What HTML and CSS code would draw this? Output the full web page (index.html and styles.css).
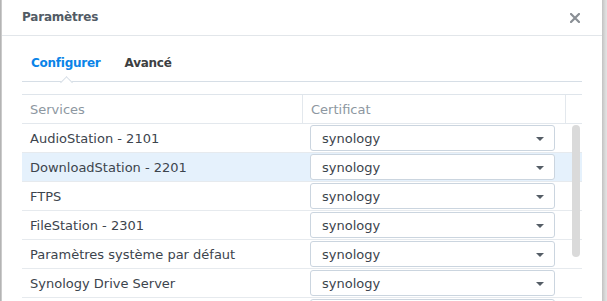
FILE: index.html
```html
<!DOCTYPE html>
<html lang="fr">
<head>
<meta charset="utf-8">
<title>Paramètres</title>
<link rel="stylesheet" href="styles.css">
</head>
<body>
<div class="frame">
  <div class="edge-left"></div>
  <div class="dialog">
    <div class="titlebar">
      <span class="title">Paramètres</span>
      <svg class="close" width="10" height="10" viewBox="0 0 10 10"><path d="M1 1L9 9M9 1L1 9" stroke="#8a8f95" stroke-width="2.2" stroke-linecap="square"/></svg>
    </div>
    <div class="content">
      <div class="tabs">
        <span class="tab active">Configurer<span class="notch"></span></span>
        <span class="tab">Avancé</span>
      </div>
      <div class="table">
        <div class="thead">
          <div class="th">Services</div>
          <div class="th">Certificat</div>
          <div class="th last"></div>
        </div>
        <div class="tbody">
          <div class="row"><div class="cell">AudioStation - 2101</div><div class="cell sel"><div class="select"><span>synology</span><span class="caret"></span></div></div><div class="cell"></div></div>
          <div class="row hl"><div class="cell">DownloadStation - 2201</div><div class="cell sel"><div class="select"><span>synology</span><span class="caret"></span></div></div><div class="cell"></div></div>
          <div class="row"><div class="cell">FTPS</div><div class="cell sel"><div class="select"><span>synology</span><span class="caret"></span></div></div><div class="cell"></div></div>
          <div class="row"><div class="cell">FileStation - 2301</div><div class="cell sel"><div class="select"><span>synology</span><span class="caret"></span></div></div><div class="cell"></div></div>
          <div class="row"><div class="cell">Paramètres système par défaut</div><div class="cell sel"><div class="select"><span>synology</span><span class="caret"></span></div></div><div class="cell"></div></div>
          <div class="row"><div class="cell">Synology Drive Server</div><div class="cell sel"><div class="select"><span>synology</span><span class="caret"></span></div></div><div class="cell"></div></div>
          <div class="row"><div class="cell"></div><div class="cell sel"><div class="select"></div></div><div class="cell"></div></div>
          <div class="scrollbar"></div>
        </div>
      </div>
    </div>
  </div>
  <div class="edge-right"></div>
</div>
</body>
</html>
```
FILE: styles.css
```css
html, body {
  margin: 0;
  padding: 0;
  background: #ffffff;
  overflow: hidden;
}
body {
  width: 607px;
  height: 301px;
  font-family: "DejaVu Sans", Verdana, sans-serif;
  font-size: 13px;
  color: #3c444d;
}
.frame {
  display: flex;
  height: 301px;
  overflow: hidden;
}
.edge-left {
  width: 2px;
  flex-shrink: 0;
  background: linear-gradient(to right, #a9a9a9, #d6d6d6);
}
.edge-right {
  width: 5px;
  flex-shrink: 0;
  background: linear-gradient(to right, #c2c2c2, #d9d9d9 60%, #e4e4e4);
}
.dialog {
  width: 600px;
  flex-shrink: 0;
  background: #fff;
  overflow: hidden;
}
.titlebar {
  height: 35px;
  border-bottom: 1px solid #e2e6ea;
  display: flex;
  align-items: center;
  justify-content: space-between;
  padding: 0 22px 0 20px;
}
.title {
  font-weight: bold;
  font-size: 12px;
  letter-spacing: -0.2px;
  color: #525b65;
  margin-top: -1px;
}
.close {
  display: block;
  margin-top: 1px;
}
.content {
  padding: 0 20px;
}
.tabs {
  height: 45px;
  border-bottom: 1px solid #d6dee6;
  display: flex;
  align-items: center;
  gap: 24px;
  padding-left: 9px;
}
.tab {
  position: relative;
  font-weight: bold;
  font-size: 12px;
  letter-spacing: -0.25px;
  color: #3d3f42;
  margin-top: 9px;
}
.tab.active {
  color: #0a84e8;
}
.notch {
  position: absolute;
  left: 50%;
  top: 22px;
  width: 8px;
  height: 8px;
  margin-left: -4px;
  background: #fff;
  border-top: 1px solid #d6dee6;
  border-left: 1px solid #d6dee6;
  transform: rotate(45deg);
}
.table {
  margin-top: 12px;
  border-top: 1px solid #dfe5eb;
}
.thead, .row {
  display: grid;
  grid-template-columns: 281px 263px 16px;
}
.thead {
  height: 28px;
  border-bottom: 1px solid #e3e8ed;
}
.th {
  display: flex;
  align-items: center;
  padding-left: 8px;
  color: #8d97a1;
  border-right: 1px solid #e3e8ed;
}
.th.last {
  border-right: none;
}
.tbody {
  position: relative;
}
.row {
  height: 28px;
  border-bottom: 1px solid #e6eaee;
}
.row.hl {
  background: #e5f1fc;
}
.cell {
  display: flex;
  align-items: center;
  padding-left: 8px;
  white-space: nowrap;
}
.cell.sel {
  padding-left: 7px;
  padding-right: 11px;
}
.select {
  flex: 1;
  height: 24px;
  border: 1px solid #cbd5df;
  border-radius: 3px;
  background: #fff;
  display: flex;
  align-items: center;
  justify-content: space-between;
  padding: 0 10px 0 11px;
}
.caret {
  width: 0;
  height: 0;
  border-left: 4.5px solid transparent;
  border-right: 4.5px solid transparent;
  border-top: 4px solid #555d66;
  margin-top: 1px;
}
.scrollbar {
  position: absolute;
  left: 550px;
  top: 1px;
  width: 8px;
  height: 132px;
  border-radius: 4px;
  background: #dadada;
}
```
